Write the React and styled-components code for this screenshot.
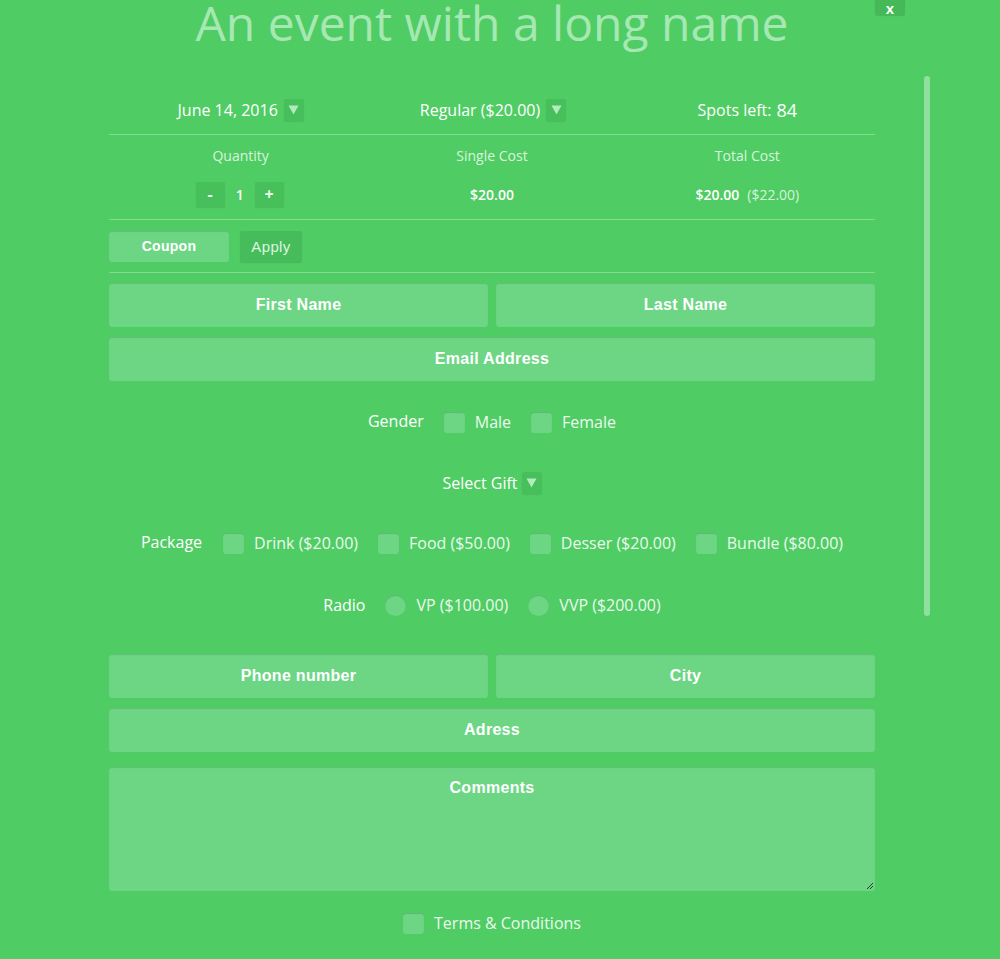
import React from "react";
import styled, { createGlobalStyle } from "styled-components";

const GlobalStyle = createGlobalStyle`
  html, body {
    margin: 0;
    padding: 0;
    background: #50cc64;
    overflow: hidden;
  }
  * { box-sizing: border-box; }
`;

const Page = styled.div`
  position: relative;
  width: 1000px;
  height: 959px;
  background: #50cc64;
  font-family: "Open Sans", sans-serif;
  color: #fff;
  overflow: hidden;
`;

const Title = styled.h1`
  margin: -12px 0 0;
  height: 70px;
  text-align: center;
  font-family: "Open Sans", sans-serif;
  font-weight: 400;
  font-size: 48px;
  line-height: 70px;
  color: #a6e8b3;
  padding-right: 16px;
`;

const CloseButton = styled.button`
  position: absolute;
  top: -6px;
  left: 875px;
  width: 30px;
  height: 21px;
  border: none;
  border-radius: 2px;
  background: #45b958;
  box-shadow: 0 1px 1px rgba(0, 0, 0, 0.1);
  color: #fff;
  font-family: "Liberation Sans", sans-serif;
  font-weight: 700;
  font-size: 15px;
  line-height: 21px;
  padding: 4px 0 0;
`;

const ScrollThumb = styled.div`
  position: absolute;
  left: 924px;
  top: 76px;
  width: 6px;
  height: 540px;
  border-radius: 3px;
  background: #8ee09c;
`;

const Form = styled.div`
  width: 766px;
  margin: 0 0 0 109px;
`;

const TopRow = styled.div`
  display: grid;
  grid-template-columns: repeat(3, 1fr);
  height: 77px;
  padding-top: 27px;
  align-items: center;
  border-bottom: 1px solid rgba(255, 255, 255, 0.3);
`;

const Cell = styled.div`
  display: flex;
  align-items: center;
  justify-content: center;
  gap: ${(p) => p.$gap ?? 6}px;
  font-size: ${(p) => p.$size || 16}px;
  font-weight: ${(p) => p.$weight || 400};
  color: ${(p) => p.$color || "#fff"};
  padding-left: ${(p) => p.$shift || 0}px;
`;

const Big = styled.span`
  font-size: 18px;
  margin-left: 5px;
`;

const ArrowBox = styled.span`
  display: inline-flex;
  align-items: center;
  justify-content: center;
  width: 20px;
  height: 22px;
  border-radius: 2px;
  background: #47bf5b;
  box-shadow: 0 1px 1px rgba(0, 0, 0, 0.08);
`;

const Arrow = () => (
  <ArrowBox>
    <svg width="11" height="10" viewBox="0 0 11 10">
      <path d="M0.5 0.5 H10.5 L5.5 9.5 Z" fill="#b2ebbd" />
    </svg>
  </ArrowBox>
);

const CostGrid = styled.div`
  display: grid;
  grid-template-columns: repeat(3, 1fr);
  grid-template-rows: 40px 38px;
  height: 85px;
  border-bottom: 1px solid rgba(255, 255, 255, 0.3);
`;

const Stepper = styled.button`
  width: 29px;
  height: 25px;
  border: none;
  border-radius: 2px;
  background: #47bf5b;
  box-shadow: 0 1px 1px rgba(0, 0, 0, 0.08);
  color: #eafaee;
  font-family: "Open Sans", sans-serif;
  font-weight: 700;
  font-size: 16px;
  padding: 0;
`;

const Muted = styled.span`
  color: #d6f4dc;
  font-weight: 400;
  margin-left: 8px;
`;

const CouponRow = styled.div`
  display: flex;
  align-items: center;
  gap: 11px;
  height: 53px;
  border-bottom: 1px solid rgba(255, 255, 255, 0.3);
`;

const Field = styled.div`
  flex: ${(p) => (p.$grow ? "1 1 0" : "none")};
  width: ${(p) => (p.$w ? `${p.$w}px` : "auto")};
  height: ${(p) => p.$h || 44}px;
  border-radius: 3px;
  background: #6dd685;
  box-shadow: inset 0 1px 1px rgba(0, 0, 0, 0.12);
  display: flex;
  justify-content: center;
  align-items: ${(p) => (p.$top ? "flex-start" : "center")};
  padding-top: ${(p) => (p.$top ? 12 : 0)}px;
  font-family: "Liberation Sans", Arial, sans-serif;
  font-weight: 700;
  font-size: ${(p) => p.$size || 16}px;
  letter-spacing: 0.3px;
  color: #fff;
  position: relative;
`;

const ApplyButton = styled.button`
  width: 62px;
  height: 31px;
  border: none;
  border-radius: 2px;
  background: #46bd5a;
  box-shadow: 0 1px 1px rgba(0, 0, 0, 0.1);
  color: #dcf6e1;
  font-family: "Liberation Sans", Arial, sans-serif;
  font-size: 15px;
  letter-spacing: 0.4px;
  padding: 0;
`;

const Fields = styled.div`
  display: flex;
  flex-direction: column;
  gap: 10px;
  margin-top: ${(p) => p.$top || 10}px;
`;

const Pair = styled.div`
  display: flex;
  gap: 8px;
`;

const OptionRow = styled.div`
  display: flex;
  justify-content: center;
  align-items: center;
  height: ${(p) => p.$h || 61}px;
  font-size: 16px;
`;

const Label = styled.span`
  color: #fff;
  margin-right: ${(p) => p.$gap ?? 20}px;
  margin-top: ${(p) => (p.$raise ? -3 : 0)}px;
`;

const Option = styled.label`
  display: flex;
  align-items: center;
  gap: 10px;
  color: #eafaee;
  margin-right: ${(p) => p.$gap ?? 20}px;
`;

const Box = styled.span`
  width: 21px;
  height: 21px;
  border-radius: ${(p) => (p.$round ? "50%" : "3px")};
  background: #6dd685;
  box-shadow: inset 0 1px 1px rgba(0, 0, 0, 0.15);
  flex-shrink: 0;
`;

const Grip = styled.svg`
  position: absolute;
  right: 1px;
  bottom: 1px;
`;

const App = () => {
  return (
    <Page>
      <GlobalStyle />
      <CloseButton>x</CloseButton>
      <ScrollThumb />
      <Title>An event with a long name</Title>
      <Form>
        <TopRow>
          <Cell $shift={8}>
            June 14, 2016 <Arrow />
          </Cell>
          <Cell $shift={2}>
            Regular ($20.00) <Arrow />
          </Cell>
          <Cell $gap={0}>
            Spots left:<Big>84</Big>
          </Cell>
        </TopRow>
        <CostGrid>
          <Cell $size={14} $color="#d8f5de" $shift={8}>Quantity</Cell>
          <Cell $size={14} $color="#d8f5de">Single Cost</Cell>
          <Cell $size={14} $color="#d8f5de">Total Cost</Cell>
          <Cell $size={14} $weight={600} $gap={11} $shift={6}>
            <Stepper>-</Stepper>1<Stepper>+</Stepper>
          </Cell>
          <Cell $size={14} $weight={600}>$20.00</Cell>
          <Cell $size={14} $weight={600} $gap={0}>
            $20.00 <Muted>($22.00)</Muted>
          </Cell>
        </CostGrid>
        <CouponRow>
          <Field $w={120} $h={31} $size={14}>
            Coupon
          </Field>
          <ApplyButton>Apply</ApplyButton>
        </CouponRow>
        <Fields $top={10}>
          <Pair>
            <Field $grow>First Name</Field>
            <Field $grow>Last Name</Field>
          </Pair>
          <Field>Email Address</Field>
        </Fields>
        <OptionRow $h={82}>
          <Label $raise $gap={20}>Gender</Label>
          <Option>
            <Box />
            Male
          </Option>
          <Option $gap={0}>
            <Box />
            Female
          </Option>
        </OptionRow>
        <OptionRow $h={40}>
          <Cell $gap={4}>
            Select Gift <Arrow />
          </Cell>
        </OptionRow>
        <OptionRow $h={80}>
          <Label $raise $gap={21}>Package</Label>
          <Option>
            <Box />
            Drink ($20.00)
          </Option>
          <Option>
            <Box />
            Food ($50.00)
          </Option>
          <Option>
            <Box />
            Desser ($20.00)
          </Option>
          <Option $gap={0}>
            <Box />
            Bundle ($80.00)
          </Option>
        </OptionRow>
        <OptionRow $h={44}>
          <Label $gap={20}>Radio</Label>
          <Option>
            <Box $round />
            VP ($100.00)
          </Option>
          <Option $gap={0}>
            <Box $round />
            VVP ($200.00)
          </Option>
        </OptionRow>
        <Fields $top={27}>
          <Pair>
            <Field $grow>Phone number</Field>
            <Field $grow>City</Field>
          </Pair>
          <Field>Adress</Field>
          <Field $h={124} $top style={{ marginTop: 5 }}>
            Comments
            <Grip width="9" height="9" viewBox="0 0 9 9">
              <path d="M8 2 L2 8 M8 5 L5 8" stroke="#333" strokeWidth="1" />
            </Grip>
          </Field>
        </Fields>
        <OptionRow $h={64}>
          <Option $gap={0}>
            <Box />
            Terms &amp; Conditions
          </Option>
        </OptionRow>
      </Form>
    </Page>
  );
};

export default App;
